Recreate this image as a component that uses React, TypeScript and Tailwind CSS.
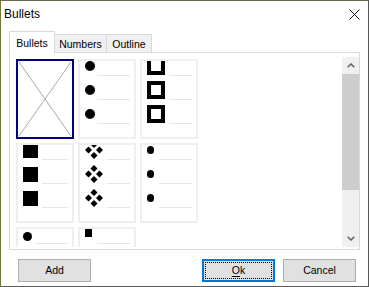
import React from "react";

type Kind = "none" | "circle" | "hollow" | "filled" | "diamond" | "dot" | "circleLow" | "tiny";

const items: Kind[] = ["none", "circle", "hollow", "filled", "diamond", "dot", "circleLow", "tiny"];

const boxWidth: Record<Kind, string> = {
  none: "w-[12px]",
  circle: "w-[12px]",
  hollow: "w-[22px]",
  filled: "w-[19px]",
  diamond: "w-[22px]",
  dot: "w-[12px]",
  circleLow: "w-[12px]",
  tiny: "w-[12px]",
};

function Bullet({ kind }: { kind: Kind }) {
  switch (kind) {
    case "circle":
      return <span className="block h-[10px] w-[10px] rounded-full bg-black" />;
    case "circleLow":
      return <span className="block h-[9px] w-[9px] translate-y-[2px] rounded-full bg-black" />;
    case "hollow":
      return <span className="block h-[18px] w-[18px] shrink-0 border-[4px] border-black bg-white" />;
    case "filled":
      return <span className="block h-[15px] w-[15px] shrink-0 bg-black" />;
    case "dot":
      return <span className="block h-[8px] w-[7px] rounded-full bg-black" />;
    case "tiny":
      return <span className="block h-[8px] w-[7px] -translate-y-[1px] bg-black" />;
    case "diamond":
      return (
        <svg width="18" height="18" viewBox="0 0 18 18" className="block shrink-0">
          <polygon points="9,0 12.5,3.5 9,7 5.5,3.5" fill="#000" />
          <polygon points="3.5,5.5 7,9 3.5,12.5 0,9" fill="#000" />
          <polygon points="14.5,5.5 18,9 14.5,12.5 11,9" fill="#000" />
          <polygon points="9,11 12.5,14.5 9,18 5.5,14.5" fill="#000" />
        </svg>
      );
    default:
      return null;
  }
}

function Cell({ kind }: { kind: Kind }) {
  if (kind === "none") {
    return (
      <div className="h-[80px] w-[58px] overflow-hidden border-2 border-[#000080] bg-white">
        <svg width="54" height="76" viewBox="0 0 54 76" className="block">
          <line x1="1" y1="1" x2="53" y2="75" stroke="#a9a9a9" strokeWidth="1" />
          <line x1="53" y1="1" x2="1" y2="75" stroke="#a9a9a9" strokeWidth="1" />
        </svg>
      </div>
    );
  }
  return (
    <div className="h-[80px] w-[58px] overflow-hidden border-2 border-[#efefef] bg-white">
      <div className="-mt-[2px] flex flex-col">
        {[0, 1, 2].map((i) => (
          <div key={i} className="flex h-[24px] shrink-0">
            <div className={`ml-[5px] flex h-[14px] shrink-0 items-center ${boxWidth[kind]}`}>
              <Bullet kind={kind} />
            </div>
            <div className="mr-[4px] mt-[16px] h-px flex-1 bg-[#e6e6e6]" />
          </div>
        ))}
      </div>
    </div>
  );
}

function Chevron({ up }: { up?: boolean }) {
  return (
    <svg width="8" height="5" viewBox="0 0 8 5" className="block">
      <polyline
        points={up ? "0.7,4.3 4,1 7.3,4.3" : "0.7,0.7 4,4 7.3,0.7"}
        fill="none"
        stroke="#606060"
        strokeWidth="1.5"
      />
    </svg>
  );
}

export default function App() {
  return (
    <div className="h-[287px] w-[370px] bg-white font-['Liberation_Sans',Arial,sans-serif] text-black">
      <div className="flex h-[287px] w-[369px] flex-col border border-[#5a5a5a] border-l-[#76743f] border-t-[#6a6a4a]">
        {/* title bar */}
        <div className="flex h-[30px] shrink-0 items-start justify-between">
          <span className="mt-[5px] pl-[3px] text-[12px] leading-[16px]">Bullets</span>
          <svg width="11" height="11" viewBox="0 0 11 11" className="mr-[8px] mt-[8px] block">
            <line x1="0.5" y1="0.5" x2="10.5" y2="10.5" stroke="#111" strokeWidth="1" />
            <line x1="10.5" y1="0.5" x2="0.5" y2="10.5" stroke="#111" strokeWidth="1" />
          </svg>
        </div>

        {/* tabs */}
        <div className="flex flex-col px-[8px]">
          <div className="flex h-[21px] items-end text-[10.5px]">
            <div className="relative z-10 -mb-px flex h-[22px] w-[46px] justify-center border border-b-0 border-[#d9d9d9] bg-white pt-[5px] leading-[13px]">
              Bullets
            </div>
            <div className="flex h-[18px] w-[52px] justify-center border-r border-t border-[#d9d9d9] bg-[#f0f0f0] pt-[3px] leading-[13px]">
              Numbers
            </div>
            <div className="flex h-[18px] w-[45px] justify-center border-r border-t border-[#d9d9d9] bg-[#f0f0f0] pt-[3px] leading-[13px]">
              Outline
            </div>
          </div>

          <div className="flex h-[198px] w-[351px] border border-[#d9d9d9] bg-white pb-[2px] pl-[4px] pt-[4px]">
            <div className="flex-1 overflow-hidden pl-[2px] pt-[2px]">
              <div className="grid grid-cols-[58px_58px_58px] gap-[4px]">
                {items.map((k, i) => (
                  <Cell key={i} kind={k} />
                ))}
              </div>
            </div>
            <div className="flex w-[17px] shrink-0 flex-col bg-[#f0f0f0]">
              <div className="flex h-[17px] items-center justify-center">
                <Chevron up />
              </div>
              <div className="h-[116px] bg-[#cdcdcd]" />
              <div className="flex-1" />
              <div className="flex h-[17px] items-center justify-center">
                <Chevron />
              </div>
            </div>
          </div>
        </div>

        {/* buttons */}
        <div className="mt-[9px] flex h-[23px] text-[10.5px]">
          <button className="ml-[17px] h-[23px] w-[73px] border border-[#adadad] bg-[#e1e1e1] leading-[13px]">
            Add
          </button>
          <div className="flex-1" />
          <button className="relative h-[23px] w-[73px] border-2 border-[#0078d7] bg-[#e1e1e1] leading-[13px]">
            <span className="absolute inset-[1px] border border-dotted border-black" />
            <span className="relative">
              <span className="underline underline-offset-2">O</span>k
            </span>
          </button>
          <button className="ml-[8px] mr-[12px] h-[23px] w-[73px] border border-[#adadad] bg-[#e1e1e1] leading-[13px]">
            Cancel
          </button>
        </div>
      </div>
    </div>
  );
}
